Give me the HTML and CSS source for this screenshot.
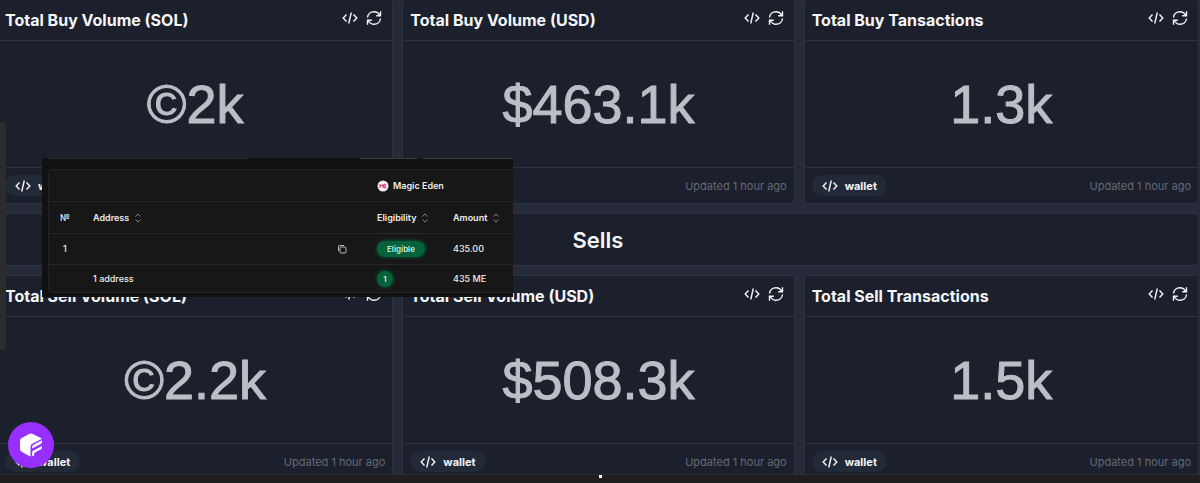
FILE: index.html
```html
<!DOCTYPE html>
<html lang="en">
<head>
<meta charset="utf-8">
<title>Trading dashboard</title>
<link rel="stylesheet" href="styles.css">
</head>
<body>
<svg class="defs" aria-hidden="true">
  <symbol id="code" viewBox="0 0 16 14"><path d="M4.5 3.500 1.200 7l3.300 3.500M11.500 3.500 14.800 7l-3.300 3.500M9.300 1.500 6.700 12.500"/></symbol>
  <symbol id="sync" viewBox="0 0 16 16"><path d="M1.500 7.500C1.800 4 4.600 1.700 8 1.700c2.500 0 4.500 1.300 6 3.800M14.500 1.300v4.500h-4.300M14.500 8.500C14.200 12 11.400 14.300 8 14.300c-2.500 0-4.500-1.300-6-3.800M1.500 14.700v-4.500h4.300"/></symbol>
  <symbol id="sort" viewBox="0 0 8 10"><path d="M1.500 3.500 4 1l2.500 2.500M1.500 6.500 4 9l2.500-2.500"/></symbol>
</svg>
<main class="board">
  <section class="card">
    <header class="card-head"><h2>Total Buy Volume (SOL)</h2><div class="tools"><button aria-label="Embed"><svg class="i-code"><use href="#code"/></svg></button><button aria-label="Refresh"><svg class="i-sync"><use href="#sync"/></svg></button></div></header>
    <p class="value">©2k</p>
    <footer class="card-foot"><a class="pill" href="#"><svg class="i-code"><use href="#code"/></svg>wallet</a><span>Updated 1 hour ago</span></footer>
  </section>
  <section class="card">
    <header class="card-head"><h2>Total Buy Volume (USD)</h2><div class="tools"><button aria-label="Embed"><svg class="i-code"><use href="#code"/></svg></button><button aria-label="Refresh"><svg class="i-sync"><use href="#sync"/></svg></button></div></header>
    <p class="value">$463.1k</p>
    <footer class="card-foot"><a class="pill" href="#"><svg class="i-code"><use href="#code"/></svg>wallet</a><span>Updated 1 hour ago</span></footer>
  </section>
  <section class="card">
    <header class="card-head"><h2>Total Buy Tansactions</h2><div class="tools"><button aria-label="Embed"><svg class="i-code"><use href="#code"/></svg></button><button aria-label="Refresh"><svg class="i-sync"><use href="#sync"/></svg></button></div></header>
    <p class="value">1.3k</p>
    <footer class="card-foot"><a class="pill" href="#"><svg class="i-code"><use href="#code"/></svg>wallet</a><span>Updated 1 hour ago</span></footer>
  </section>
  <h1 class="divider">Sells</h1>
  <section class="card">
    <header class="card-head"><h2>Total Sell Volume (SOL)</h2><div class="tools"><button aria-label="Embed"><svg class="i-code"><use href="#code"/></svg></button><button aria-label="Refresh"><svg class="i-sync"><use href="#sync"/></svg></button></div></header>
    <p class="value">©2.2k</p>
    <footer class="card-foot"><a class="pill" href="#"><svg class="i-code"><use href="#code"/></svg>wallet</a><span>Updated 1 hour ago</span></footer>
  </section>
  <section class="card">
    <header class="card-head"><h2>Total Sell Volume (USD)</h2><div class="tools"><button aria-label="Embed"><svg class="i-code"><use href="#code"/></svg></button><button aria-label="Refresh"><svg class="i-sync"><use href="#sync"/></svg></button></div></header>
    <p class="value">$508.3k</p>
    <footer class="card-foot"><a class="pill" href="#"><svg class="i-code"><use href="#code"/></svg>wallet</a><span>Updated 1 hour ago</span></footer>
  </section>
  <section class="card">
    <header class="card-head"><h2>Total Sell Transactions</h2><div class="tools"><button aria-label="Embed"><svg class="i-code"><use href="#code"/></svg></button><button aria-label="Refresh"><svg class="i-sync"><use href="#sync"/></svg></button></div></header>
    <p class="value">1.5k</p>
    <footer class="card-foot"><a class="pill" href="#"><svg class="i-code"><use href="#code"/></svg>wallet</a><span>Updated 1 hour ago</span></footer>
  </section>
</main>
<div class="taskbar"><i class="dot"></i></div>
<div class="side-handle"></div>

<aside class="popup">
  <div class="tabs"><i class="tab-wide"></i><i class="tab-mid"></i><i class="tab-end"></i></div>
  <table class="claims">
    <colgroup><col class="c-no"><col class="c-address"><col class="c-copy"><col class="c-elig"><col class="c-amount"></colgroup>
    <thead>
      <tr><td colspan="3"></td><th colspan="2"><span class="brand"><svg class="i-eden" viewBox="0 0 12 12"><circle cx="6" cy="6" r="5.500" fill="#f6eef2"/><path d="M3 8V4.300l1.600 1.900L6 4.300V8M9.300 4.300H7.400L6.500 6.100l.9 1.700h1.900M6.500 6.100h2.500" fill="none" stroke="#d52a6a" stroke-width="1"/></svg>Magic Eden</span></th></tr>
      <tr><th class="no">№</th><th>Address<svg class="i-sort"><use href="#sort"/></svg></th><th></th><th>Eligibility<svg class="i-sort"><use href="#sort"/></svg></th><th>Amount<svg class="i-sort"><use href="#sort"/></svg></th></tr>
    </thead>
    <tbody>
      <tr><td class="no">1</td><td></td><td><button class="copy" aria-label="Copy address"><svg class="i-copy" viewBox="0 0 10 10"><rect x="3" y="3" width="6" height="6" rx="1"/><path d="M1.500 7V2.200q0-.7.700-.7H7"/></svg></button></td><td><span class="badge">Eligible</span></td><td>435.00</td></tr>
      <tr class="total"><td></td><td>1 address</td><td></td><td><span class="badge count">1</span></td><td>435 ME</td></tr>
    </tbody>
  </table>
</aside>

<button class="chat" aria-label="Open chat"><svg class="i-chat" viewBox="0 0 24 24"><path fill="#fff" d="M12 .5q.7 0 1.300.3l8 3.900q1 .5 1.300 1.300L14 10.300q-2.500 1.300-2.500 3.700v9.400l-.8-.2-8-4.500Q1 17.700 1 16V7.500q0-1.700 1.600-2.600l8-4.100Q11.300.5 12 .5z"/><path fill="#fff" d="M13.200 14q0-1.700 1.500-2.500L23 7.300v1.500q0 1.500-1.400 2.300L13.200 15.500zM13.200 18.200l9.800-5.200v1.400q0 1.400-1.400 2.200L17 19.100l-1.800 1v2.200l-2 1.200z"/></svg></button>
</body>
</html>
```
FILE: styles.css
```css
* { box-sizing: border-box; }

body {
  margin: 0;
  height: 100vh;
  display: flex;
  flex-direction: column;
  overflow: hidden;
  position: relative;
  background: #252b38;
  color: #f4f5f7;
  font-family: Inter, "Liberation Sans", sans-serif;
}

h1, h2, p { margin: 0; }
button { padding: 0; border: 0; background: none; color: inherit; font: inherit; display: flex; }
svg { fill: none; stroke: currentColor; }
.defs { position: absolute; width: 0; height: 0; }

.board {
  flex: 1;
  min-height: 0;
  overflow: hidden;
  margin: -1px 1px 0 -3px;
  display: grid;
  grid-template-columns: 396fr 392fr 395fr;
  grid-auto-rows: max-content;
  gap: 9px;
}

.card, .divider {
  background: #1b202c;
  border: 1px solid #2c323e;
  border-radius: 4px;
}

.card-head {
  height: 41px;
  padding: 0 10px 0 7px;
  display: flex;
  align-items: center;
  justify-content: space-between;
  border-bottom: 1px solid #2c323e;
}
.card-head h2 { font-size: 16px; line-height: 20px; font-weight: 700; }
.tools { display: flex; align-items: center; gap: 8px; padding-bottom: 5px; }
.i-code { width: 16px; height: 14px; stroke-width: 1.4; }
.i-sync { width: 16px; height: 16px; stroke-width: 1.4; }

.value {
  height: 126px;
  display: flex;
  align-items: center;
  justify-content: center;
  font: 54px "Liberation Sans", Arial, sans-serif;
  color: #bbbfc5;
  -webkit-text-stroke: 1px #bbbfc5;
}

.card-foot {
  height: 36px;
  padding: 0 7px;
  display: flex;
  align-items: center;
  justify-content: space-between;
  border-top: 1px solid #2c323e;
  font-size: 11px;
  color: #646a75;
}
.pill {
  height: 21px;
  padding: 0 10px;
  display: flex;
  align-items: center;
  gap: 7px;
  border-radius: 11px;
  background: #232a37;
  color: #f4f5f7;
  font-weight: 700;
  text-decoration: none;
}

.divider {
  grid-column: 1 / -1;
  height: 53px;
  display: flex;
  align-items: center;
  justify-content: center;
  font-size: 22px;
  font-weight: 600;
}

.taskbar { flex: none; height: 9px; background: #1f1f1f; border-top: 1px solid #2b2d31; }
.dot { display: block; width: 3px; height: 3px; margin: 0 auto; background: #fff; }

.side-handle {
  position: absolute;
  left: 0;
  top: 122px;
  width: 6px;
  height: 228px;
  border-radius: 0 3px 3px 0;
  background: #2c2c2c;
}

.popup {
  position: absolute;
  left: 42px;
  top: 158px;
  width: 471px;
  padding: 0 0 4px 6px;
  background: #111;
  color: #ededed;
}
.tabs { height: 11px; display: flex; gap: 5px; }
.tabs i { height: 1px; background: #2a2a2a; }
.tab-wide { width: 200px; margin-right: 107px; }
.tabs .tab-mid, .tabs .tab-end { background: #3a3a3a; }
.tab-mid { width: 58px; }
.tab-end { flex: 1; }

.claims {
  width: 100%;
  table-layout: fixed;
  border-spacing: 0;
  background: #171717;
  border: 1px solid #242424;
  border-right: 0;
  border-radius: 4px 0 0 4px;
  font-size: 9px;
  line-height: 12px;
  font-weight: 500;
}
.claims th, .claims td { height: 32px; padding: 0; text-align: left; border-bottom: 1px solid #272727; }
.claims th { font-weight: 600; }
.claims .no { padding-left: 11px; font-weight: 500; }
.claims tbody td { height: 31px; }
.claims tbody .no { padding-left: 14px; }
.claims .total td { height: 27px; border-bottom: 0; }
.c-no { width: 44px; }
.c-copy { width: 40px; }
.c-elig { width: 76px; }
.c-amount { width: 60px; }
.brand { display: flex; align-items: center; gap: 4px; }
.i-eden { width: 12px; height: 12px; stroke: none; }
.i-sort { width: 8px; height: 10px; margin-left: 5px; vertical-align: middle; color: #858585; }
.i-copy { width: 10px; height: 10px; color: #b5b5b5; }
.badge {
  display: inline-flex;
  align-items: center;
  justify-content: center;
  width: 48px;
  height: 16px;
  border-radius: 8px;
  background: #05623a;
  box-shadow: 0 0 4px #05623a;
  color: #c9f0d9;
  font-size: 8px;
  font-weight: 600;
}
.count { width: 16px; }

.chat {
  position: absolute;
  left: 8px;
  bottom: 15px;
  width: 46px;
  height: 46px;
  align-items: center;
  justify-content: center;
  border-radius: 50%;
  background: #962fff;
}
.i-chat { width: 24px; height: 24px; stroke: none; }
```
